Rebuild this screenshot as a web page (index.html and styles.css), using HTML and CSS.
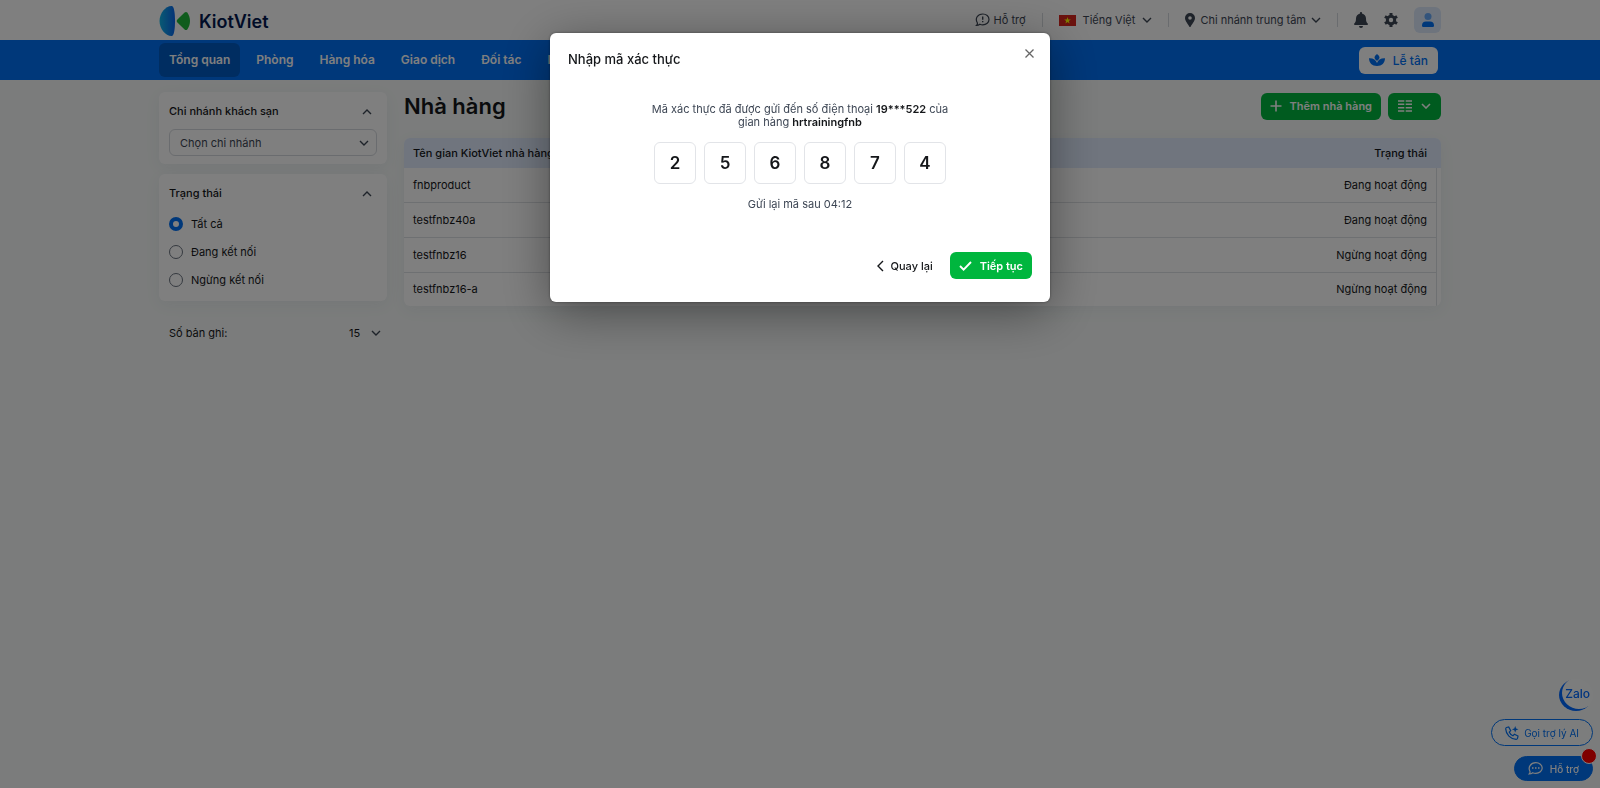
FILE: index.html
```html
<!DOCTYPE html>
<html lang="vi">
<head>
    <meta charset="UTF-8">
    <title>KiotViet - Nhà hàng</title>
    <link rel="stylesheet" href="styles.css">
</head>
<body>

    <header class="topbar">
        <div class="container topbar-inner">
            <a href="#" class="logo">
                <svg width="32" height="32" viewBox="0 0 32 32" aria-hidden="true">
                    <defs>
                        <linearGradient id="logoBlue" x1="0" x2="1"><stop offset="0" stop-color="#12b5e8"/><stop offset="1" stop-color="#0a66ee"/></linearGradient>
                    </defs>
                    <path fill="url(#logoBlue)" d="M13 1C15 1.400 16 8 16 16s-1 14.600-3 15C7 31.500 0.500 24 0.500 16S7 0.500 13 1z"/>
                    <path fill="#1fb83a" d="M18.400 14.500l7.200-7c.8-.8 2-.8 2.700.1C30 10 31 13 31 16s-1 6-2.700 8.400c-.7.900-1.900.9-2.700.1l-7.200-7c-.9-.9-.9-2.100 0-3z"/>
                </svg>
                <span>KiotViet</span>
            </a>
            <div class="top-menu">
                <a href="#" class="top-link">
                    <svg width="15" height="14" viewBox="0 0 15 14" fill="none" stroke="#3d4654" stroke-width="1.200" aria-hidden="true"><path d="M1.500 12.500c.9-.9 1.100-1.800.8-2.700C-.2 5.500 2.500 1 7.800 1c3.500 0 6.200 2.400 6.200 5.400s-2.700 5.500-6.200 5.500c-1.100 0-2.100-.2-2.900-.6-1 .8-2.200 1.200-3.400 1.200z"/><path d="M7.700 3.600v3.200M7.700 8v1.300" stroke-width="1.400"/></svg>
                    Hỗ trợ
                </a>
                <span class="divider"></span>
                <button type="button" class="top-link language">
                    <svg width="17" height="11" viewBox="0 0 17 11" aria-hidden="true"><path fill="#d8251d" d="M0 0h17v11H0z"/><path fill="#ff0" d="M8.500 2l.8 2.400h2.600L9.800 5.900l.8 2.500-2.100-1.500-2.100 1.500.8-2.500-2.100-1.500h2.600z"/></svg>
                    Tiếng Việt
                    <svg class="chevron" width="10" height="6" viewBox="0 0 10 6" aria-hidden="true"><path d="M1 1l4 4 4-4"/></svg>
                </button>
                <span class="divider"></span>
                <button type="button" class="top-link branch">
                    <svg width="10" height="14" viewBox="0 0 10 14" aria-hidden="true"><path fill="#3d4654" fill-rule="evenodd" d="M5 0a5 5 0 0 1 5 5c0 3-3.200 6.300-4.400 8.700a.7.7 0 0 1-1.200 0C3.200 11.300 0 8 0 5a5 5 0 0 1 5-5zm0 3.200a1.800 1.800 0 1 0 0 3.600 1.800 1.800 0 0 0 0-3.600z"/></svg>
                    Chi nhánh trung tâm
                    <svg class="chevron" width="10" height="6" viewBox="0 0 10 6" aria-hidden="true"><path d="M1 1l4 4 4-4"/></svg>
                </button>
                <span class="divider"></span>
                <button type="button" class="icon-btn" aria-label="Thông báo">
                    <svg width="14" height="16" viewBox="0 0 14 16" fill="#3d4654" aria-hidden="true"><path d="M7 0c.6 0 1 .4 1 1v.6c2.300.5 4 2.400 4 4.900 0 3.200.7 3.800 1.700 5 .6.700.2 1.500-.7 1.500H1c-.9 0-1.300-.8-.7-1.500 1-1.200 1.700-1.800 1.700-5 0-2.500 1.700-4.400 4-4.900V1c0-.6.4-1 1-1zM5 14h4a2 2 0 0 1-4 0z"/></svg>
                </button>
                <button type="button" class="icon-btn" aria-label="Thiết lập">
                    <svg width="14" height="14" viewBox="0 0 14 14" aria-hidden="true"><g fill="#3d4654"><path d="M5.500 0h3v14h-3z"/><path d="M5.500 0h3v14h-3z" transform="rotate(60 7 7)"/><path d="M5.500 0h3v14h-3z" transform="rotate(120 7 7)"/><circle cx="7" cy="7" r="5.200"/></g><circle cx="7" cy="7" r="2.200" fill="#fff"/></svg>
                </button>
                <button type="button" class="user-btn" aria-label="Tài khoản">
                    <svg width="12" height="14" viewBox="0 0 12 14" aria-hidden="true"><circle cx="6" cy="3.500" r="3.500" fill="#66a9f8"/><path fill="#0070f4" d="M0 12.500C0 10 1.500 8.500 4 8.500h4c2.500 0 4 1.500 4 4 0 .9-.4 1.500-1.200 1.500H1.200C.4 14 0 13.400 0 12.500z"/></svg>
                </button>
            </div>
        </div>
    </header>

    <nav class="navbar">
        <div class="container navbar-inner">
            <a href="#" class="nav-item active">Tổng quan</a>
            <a href="#" class="nav-item">Phòng</a>
            <a href="#" class="nav-item">Hàng hóa</a>
            <a href="#" class="nav-item">Giao dịch</a>
            <a href="#" class="nav-item">Đối tác</a>
            <a href="#" class="nav-item">Nhân viên</a>
            <button type="button" class="reception-btn">
                <svg width="16" height="13" viewBox="0 0 16 13" fill="#0070f4" aria-hidden="true"><path d="M8 0c1.600 1.200 2.500 2.500 2.500 3.600S9.500 6 8 7C6.500 6 5.500 4.700 5.500 3.600S6.400 1.200 8 0z"/><path d="M0 4.300c4.200-.2 7 1.500 8 4.700 1-3.200 3.800-4.900 8-4.700-.2 4.900-3 7.700-8 7.700S.2 9.200 0 4.300z"/></svg>
                Lễ tân
            </button>
        </div>
    </nav>

    <main class="container layout">
        <aside class="sidebar">
            <section class="card">
                <div class="card-head">
                    <label for="branch">Chi nhánh khách sạn</label>
                    <svg class="chevron" width="10" height="6" viewBox="0 0 10 6" aria-hidden="true"><path d="M1 5l4-4 4 4"/></svg>
                </div>
                <select id="branch" class="branch-select">
                    <option>Chọn chi nhánh</option>
                </select>
            </section>
            <section class="card">
                <div class="card-head">
                    <span>Trạng thái</span>
                    <svg class="chevron" width="10" height="6" viewBox="0 0 10 6" aria-hidden="true"><path d="M1 5l4-4 4 4"/></svg>
                </div>
                <div class="radio-list">
                    <label><input type="radio" name="status" checked> Tất cả</label>
                    <label><input type="radio" name="status"> Đang kết nối</label>
                    <label><input type="radio" name="status"> Ngừng kết nối</label>
                </div>
            </section>
            <div class="page-size">
                <label for="pageSize">Số bản ghi:</label>
                <select id="pageSize">
                    <option>15</option>
                </select>
            </div>
        </aside>

        <section class="content">
            <div class="content-head">
                <h1>Nhà hàng</h1>
                <button type="button" class="btn btn-green">
                    <svg width="12" height="12" viewBox="0 0 12 12" fill="none" stroke="#fff" stroke-width="1.600" aria-hidden="true"><path d="M6 .5v11M.5 6h11"/></svg>
                    Thêm nhà hàng
                </button>
                <button type="button" class="btn btn-green btn-columns" aria-label="Tùy chọn cột">
                    <svg width="14" height="12" viewBox="0 0 14 12" fill="none" stroke="#fff" stroke-width="1.600" aria-hidden="true"><path d="M0 1h6.300M7.700 1H14M0 4.300h6.300M7.700 4.300H14M0 7.700h6.300M7.700 7.700H14M0 11h6.300M7.700 11H14"/></svg>
                    <svg width="10" height="6" viewBox="0 0 10 6" fill="none" stroke="#fff" stroke-width="1.600" aria-hidden="true"><path d="M1 1l4 4 4-4"/></svg>
                </button>
            </div>
            <table class="grid">
                <thead>
                    <tr><th>Tên gian KiotViet nhà hàng</th><th>Trạng thái</th><th class="gutter"></th></tr>
                </thead>
                <tbody>
                    <tr><td>fnbproduct</td><td>Đang hoạt động</td><td class="gutter"></td></tr>
                    <tr><td>testfnbz40a</td><td>Đang hoạt động</td><td class="gutter"></td></tr>
                    <tr><td>testfnbz16</td><td>Ngừng hoạt động</td><td class="gutter"></td></tr>
                    <tr><td>testfnbz16-a</td><td>Ngừng hoạt động</td><td class="gutter"></td></tr>
                </tbody>
            </table>
        </section>
    </main>

    <div class="floating">
        <a href="#" class="zalo">Zalo</a>
        <button type="button" class="float-btn call-ai">
            <svg width="14" height="14" viewBox="0 0 14 14" fill="none" stroke="#0070f4" stroke-width="1.200" aria-hidden="true"><path d="M1.500 1.500L3.700 1l2 3.600-1.500 1.500c.7 1.700 1.900 3 3.700 3.700l1.500-1.500L13 10l-.5 2.300c-.2.700-.7 1-1.400 1C5.400 13 1 8.500.7 2.900c0-.7.200-1.200.8-1.400z"/><path fill="#0070f4" stroke="none" d="M10.200 0l.9 2.400 2.400.9-2.400.9-.9 2.400-.9-2.400-2.400-.9 2.400-.9z"/></svg>
            Gọi trợ lý AI
        </button>
        <button type="button" class="float-btn support">
            <svg width="15" height="13" viewBox="0 0 15 13" fill="none" stroke="#fff" stroke-width="1.200" aria-hidden="true"><path d="M1.200 12c.8-.8 1-1.600.8-2.500C-.3 5.500 2.500.7 7.800.7c3.600 0 6.400 2.300 6.400 5.300s-2.800 5.300-6.400 5.300c-1.100 0-2.200-.2-3.100-.6-1 .8-2.200 1.300-3.500 1.300z"/><path d="M4 6h1.500M7 6h1.500M10 6h1.500" stroke-width="1.600"/></svg>
            Hỗ trợ
            <span class="badge"></span>
        </button>
    </div>

    <div class="overlay">
        <form class="modal" role="dialog" aria-labelledby="modalTitle">
            <div class="modal-head">
                <h2 id="modalTitle">Nhập mã xác thực</h2>
                <button type="button" class="close-btn" aria-label="Đóng">
                    <svg width="9" height="9" viewBox="0 0 9 9" fill="none" stroke="#666" stroke-width="1.300" aria-hidden="true"><path d="M.5.5l8 8M8.500.5l-8 8"/></svg>
                </button>
            </div>
            <p class="hint">Mã xác thực đã được gửi đến số điện thoại <b>19***522</b> của gian hàng <b>hrtrainingfnb</b></p>
            <div class="otp">
                <input type="text" maxlength="1" value="2" aria-label="Số thứ 1">
                <input type="text" maxlength="1" value="5" aria-label="Số thứ 2">
                <input type="text" maxlength="1" value="6" aria-label="Số thứ 3">
                <input type="text" maxlength="1" value="8" aria-label="Số thứ 4">
                <input type="text" maxlength="1" value="7" aria-label="Số thứ 5">
                <input type="text" maxlength="1" value="4" aria-label="Số thứ 6">
            </div>
            <p class="resend">Gửi lại mã sau 04:12</p>
            <div class="modal-foot">
                <button type="button" class="btn btn-back">
                    <svg width="7" height="12" viewBox="0 0 7 12" fill="none" stroke="#15171a" stroke-width="1.400" aria-hidden="true"><path d="M6 1L1 6l5 5"/></svg>
                    Quay lại
                </button>
                <button type="submit" class="btn btn-green">
                    <svg width="13" height="10" viewBox="0 0 13 10" fill="none" stroke="#fff" stroke-width="1.900" aria-hidden="true"><path d="M1 5l3.600 3.600L12 1"/></svg>
                    Tiếp tục
                </button>
            </div>
        </form>
    </div>

</body>
</html>
```
FILE: styles.css
```css
* {
    box-sizing: border-box;
}

body {
    margin: 0;
    min-height: 100vh;
    background: #f6f9f8;
    color: #15171a;
    font-family: Inter, "Liberation Sans", sans-serif;
    font-size: 11px;
    line-height: 13px;
}

button,
input,
select {
    font-family: inherit;
    font-size: inherit;
    color: inherit;
}

button {
    border: none;
    background: none;
    padding: 0;
    cursor: pointer;
}

a {
    color: inherit;
    text-decoration: none;
}

svg {
    flex: none;
}

.container {
    width: 100%;
    max-width: 1282px;
    margin: 0 auto;
}

.chevron {
    fill: none;
    stroke: #3d4654;
    stroke-width: 1.4;
}

/* top bar */
.topbar {
    background: #fff;
}

.topbar-inner {
    display: flex;
    align-items: center;
    justify-content: space-between;
    height: 40px;
}

.logo {
    display: flex;
    align-items: center;
    gap: 8px;
    padding-top: 2px;
    color: #03184f;
    font-size: 18px;
    font-weight: 600;
}

.top-menu {
    display: flex;
    align-items: center;
}

.top-link {
    display: flex;
    align-items: center;
    gap: 4px;
    color: #3d4654;
}

.language {
    gap: 7px;
}

.branch {
    gap: 5px;
}

.divider {
    width: 1px;
    height: 14px;
    margin: 0 16px;
    background: #d5d9de;
}

.icon-btn {
    display: flex;
    margin-right: 16px;
}

.user-btn {
    display: flex;
    align-items: center;
    justify-content: center;
    width: 27px;
    height: 26px;
    border-radius: 6px;
    background: #dce8fb;
}

/* navigation */
.navbar {
    background: #0070f4;
}

.navbar-inner {
    display: flex;
    align-items: center;
    gap: 6px;
    height: 40px;
}

.nav-item {
    padding: 10px;
    border-radius: 6px;
    color: #fff;
    font-size: 12px;
    font-weight: 600;
    line-height: 14px;
}

.nav-item.active {
    background: #005ac3;
}

.reception-btn {
    display: flex;
    align-items: center;
    gap: 8px;
    height: 27px;
    margin-left: auto;
    margin-right: 3px;
    padding: 0 10px;
    border-radius: 6px;
    background: #fff;
    color: #0070f4;
    font-size: 12px;
    font-weight: 500;
}

/* page */
.layout {
    display: flex;
    gap: 17px;
    padding-top: 12px;
}

.sidebar {
    flex: 0 0 228px;
}

.card {
    margin-bottom: 10px;
    padding: 13px 10px 8px;
    border-radius: 6px;
    background: #fff;
    box-shadow: 0 4px 16px rgba(40, 60, 100, 0.06);
}

.card-head {
    display: flex;
    align-items: center;
    justify-content: space-between;
    padding-right: 5px;
    font-weight: 500;
}

.branch-select {
    display: block;
    width: 100%;
    height: 27px;
    margin-top: 11px;
    padding: 0 10px;
    border: 1px solid #d5d9de;
    border-radius: 6px;
    color: #3d4654;
    appearance: none;
    background: #fff url("data:image/svg+xml,%3Csvg xmlns='http://www.w3.org/2000/svg' width='10' height='6' fill='none' stroke='%233d4654' stroke-width='1.4'%3E%3Cpath d='M1 1l4 4 4-4'/%3E%3C/svg%3E") no-repeat right 7px center;
}

.radio-list {
    display: flex;
    flex-direction: column;
    gap: 14px;
    padding: 17px 0 6px;
}

.radio-list label {
    display: flex;
    align-items: center;
    gap: 8px;
    height: 14px;
}

.radio-list input {
    width: 14px;
    height: 14px;
    margin: 0;
    border: 1px solid #6b7380;
    border-radius: 50%;
    appearance: none;
}

.radio-list input:checked {
    border: 4px solid #0070f4;
}

.page-size {
    display: flex;
    align-items: center;
    justify-content: space-between;
    padding: 12px 6px 0 10px;
}

.page-size select {
    height: 20px;
    padding: 0 20px 0 0;
    border: none;
    appearance: none;
    background: url("data:image/svg+xml,%3Csvg xmlns='http://www.w3.org/2000/svg' width='10' height='6' fill='none' stroke='%233d4654' stroke-width='1.4'%3E%3Cpath d='M1 1l4 4 4-4'/%3E%3C/svg%3E") no-repeat right center;
}

.content {
    flex: 1;
}

.content-head {
    display: flex;
    align-items: center;
    gap: 7px;
    margin-bottom: 18px;
}

h1 {
    flex: 1;
    margin: 0;
    font-size: 22px;
    font-weight: 600;
    line-height: 28px;
}

.btn {
    display: flex;
    align-items: center;
    gap: 8px;
    height: 27px;
    padding: 0 9px;
    border-radius: 6px;
    font-weight: 500;
}

.btn-green {
    background: #00b63e;
    color: #fff;
    font-weight: 600;
}

.btn-columns {
    gap: 9px;
    padding: 0 10px;
}

.grid {
    width: 100%;
    border-spacing: 0;
    border-radius: 6px;
    overflow: hidden;
    background: #fff;
    box-shadow: 0 4px 16px rgba(40, 60, 100, 0.06);
}

.grid th,
.grid td {
    height: 35px;
    padding: 0 9px;
    text-align: left;
    border-bottom: 1px solid #dde0e4;
}

.grid th {
    height: 30px;
    border: none;
    background: #e0ebfd;
    font-weight: 500;
}

.grid tr:last-child td {
    height: 33px;
    border-bottom: none;
}

.grid th:nth-child(2),
.grid td:nth-child(2) {
    text-align: right;
}

.grid .gutter {
    width: 5px;
    padding: 0;
}

.grid td.gutter {
    border-bottom: none;
    border-left: 1px solid #dde0e4;
}

/* floating buttons */
.floating {
    position: fixed;
    right: 7px;
    bottom: 7px;
    display: flex;
    flex-direction: column;
    align-items: flex-end;
    font-size: 10px;
}

.zalo {
    width: 34px;
    height: 32px;
    margin-bottom: 8px;
    border-radius: 50%;
    background: #f9fbfb;
    box-shadow: inset 3px -2px 0 #0068ff;
    color: #0068ff;
    font-size: 12px;
    font-weight: 500;
    line-height: 30px;
    padding-right: 3px;
    text-align: right;
}

.float-btn {
    display: flex;
    align-items: center;
    gap: 5px;
    height: 27px;
    padding: 0 13px;
    border: 1px solid #0070f4;
    border-radius: 14px;
    background: #f9fbfb;
    color: #0070f4;
}

.support {
    position: relative;
    height: 25px;
    margin-top: 10px;
    gap: 7px;
    background: #0070f4;
    color: #fff;
    font-weight: 500;
}

.badge {
    position: absolute;
    top: -9px;
    right: -5px;
    width: 16px;
    height: 16px;
    border: 1px solid #fff;
    border-radius: 50%;
    background: #f00;
}

/* verification dialog */
.overlay {
    position: fixed;
    inset: 0;
    display: flex;
    align-items: flex-start;
    justify-content: center;
    padding-top: 33px;
    background: rgba(0, 0, 0, 0.5);
}

.modal {
    width: 500px;
    padding: 13px 18px 23px;
    border-radius: 6px;
    background: #fff;
    box-shadow: 0 0 3px rgba(0, 0, 0, 0.4), 0 10px 50px rgba(0, 0, 0, 0.4);
}

.modal-head {
    display: flex;
    align-items: flex-start;
    justify-content: space-between;
}

h2 {
    margin: 5px 0 0;
    font-size: 13px;
    font-weight: 500;
    line-height: 16px;
}

.close-btn {
    display: flex;
    padding: 3px 0;
    margin-right: -2px;
}

.hint {
    width: 300px;
    margin: 36px auto 13px;
    color: #3d4654;
    text-align: center;
}

.hint b {
    color: #15171a;
    font-weight: 600;
}

.otp {
    display: flex;
    justify-content: center;
    gap: 8px;
}

.otp input {
    width: 42px;
    height: 42px;
    padding: 0;
    border: 1px solid #e2e4e8;
    border-radius: 6px;
    font-size: 17px;
    font-weight: 600;
    text-align: center;
}

.resend {
    margin: 14px 0 41px;
    color: #3d4654;
    text-align: center;
}

.modal-foot {
    display: flex;
    justify-content: flex-end;
    gap: 8px;
}

.btn-back {
    gap: 6px;
}
```
